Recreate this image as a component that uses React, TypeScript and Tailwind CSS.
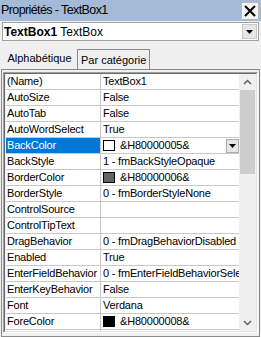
import React from "react"

type Row = { name: string; value: string; swatch?: string; selected?: boolean }

const rows: Row[] = [
  { name: "(Name)", value: "TextBox1" },
  { name: "AutoSize", value: "False" },
  { name: "AutoTab", value: "False" },
  { name: "AutoWordSelect", value: "True" },
  { name: "BackColor", value: "&H80000005&", swatch: "#ffffff", selected: true },
  { name: "BackStyle", value: "1 - fmBackStyleOpaque" },
  { name: "BorderColor", value: "&H80000006&", swatch: "#646464" },
  { name: "BorderStyle", value: "0 - fmBorderStyleNone" },
  { name: "ControlSource", value: "" },
  { name: "ControlTipText", value: "" },
  { name: "DragBehavior", value: "0 - fmDragBehaviorDisabled" },
  { name: "Enabled", value: "True" },
  { name: "EnterFieldBehavior", value: "0 - fmEnterFieldBehaviorSelectAll" },
  { name: "EnterKeyBehavior", value: "False" },
  { name: "Font", value: "Verdana" },
  { name: "ForeColor", value: "&H80000008&", swatch: "#000000" },
  { name: "", value: "" },
]

function DownTriangle() {
  return (
    <svg width="7" height="4" viewBox="0 0 7 4">
      <path d="M0 0h7L3.5 4z" fill="#000" />
    </svg>
  )
}

function Chevron({ up }: { up?: boolean }) {
  return (
    <svg width="9" height="6" viewBox="0 0 9 6">
      <path d={up ? "M1 5L4.5 1.5L8 5" : "M1 1L4.5 4.5L8 1"} stroke="#606060" strokeWidth="1.5" fill="none" />
    </svg>
  )
}

export default function App() {
  return (
    <div className="w-[261px] h-[337px] overflow-hidden bg-[#f0f0f0] text-black flex flex-col" style={{ fontFamily: '"Liberation Sans", Arial, sans-serif' }}>
      {/* Title bar */}
      <div className="h-[21px] shrink-0 bg-[#a3bbd7] flex items-center justify-between pl-[1px] pr-[2px]">
        <span className="text-[12.5px] tracking-[-0.6px]">Propriétés - TextBox1</span>
        <div className="w-[18px] h-[18px] mt-[1px] bg-[#f4f4f4] border border-[#b8b8b8] flex items-center justify-center">
          <svg width="12" height="12" viewBox="0 0 12 12">
            <path d="M1 1L11 11M11 1L1 11" stroke="#000" strokeWidth="2" />
          </svg>
        </div>
      </div>

      {/* Object combo */}
      <div className="mt-[1px] mx-[2px] h-[19px] shrink-0 bg-white border border-[#a0a0a0] flex items-center">
        <span className="pl-[1px] text-[12px] flex-1 whitespace-nowrap">
          <b>TextBox1</b> TextBox
        </span>
        <div className="w-[15px] h-[15px] mr-[1px] bg-[#e6e6e6] border border-[#c8c8c8] flex items-center justify-center">
          <DownTriangle />
        </div>
      </div>

      {/* Tabs */}
      <div className="mt-[4px] h-[24px] shrink-0 flex items-end pl-[2px] text-[11px]">
        <div className="h-[24px] w-[75px] pt-[2px] flex items-center justify-center bg-[#f0f0f0]">Alphabétique</div>
        <div className="h-[20px] px-[3px] pt-[1px] flex items-center border-l border-r border-t border-[#8a8a8a] bg-[#f0f0f0]">Par catégorie</div>
      </div>

      {/* Grid panel */}
      <div className="flex-1 min-h-0 mx-[1px] border border-[#8a8a8a] pt-[2px] pb-[3px] px-[1px]">
        <div className="h-full border-t border-l border-[#a0a0a0] border-r border-r-white border-b border-b-white">
          <div className="h-full border-t border-l border-[#696969] border-r border-r-[#e3e3e3] border-b border-b-[#e3e3e3] flex pl-[1px]">
            <div className="flex-1 bg-white text-[11px] tracking-[-0.2px] overflow-hidden">
              {rows.map((r, i) => (
                <div key={i} className="h-[16px] flex border-b border-[#c8c8c8]">
                  <div className={`w-[95px] shrink-0 pl-[1px] flex items-center border-r border-[#c8c8c8] whitespace-nowrap overflow-hidden ${r.selected ? "bg-[#0078d7] text-white" : ""}`}>
                    {r.name}
                  </div>
                  <div className="flex-1 min-w-0 flex items-center pl-[2px] overflow-hidden whitespace-nowrap">
                    {r.swatch && (
                      <div className="w-[12px] h-[11px] shrink-0 mr-[5px] border border-black" style={{ background: r.swatch }} />
                    )}
                    <span className="flex-1">{r.value}</span>
                    {r.selected && (
                      <div className="w-[13px] h-[14px] shrink-0 bg-[#e6e6e6] border border-[#adadad] flex items-center justify-center">
                        <DownTriangle />
                      </div>
                    )}
                  </div>
                </div>
              ))}
            </div>
            {/* Scrollbar */}
            <div className="w-[17px] bg-[#f0f0f0] flex flex-col items-center">
              <div className="h-[16px] flex items-center justify-center"><Chevron up /></div>
              <div className="w-[15px] h-[84px] bg-[#cdcdcd]" />
              <div className="flex-1" />
              <div className="h-[17px] flex items-center justify-center"><Chevron /></div>
            </div>
          </div>
        </div>
      </div>
    </div>
  )
}
